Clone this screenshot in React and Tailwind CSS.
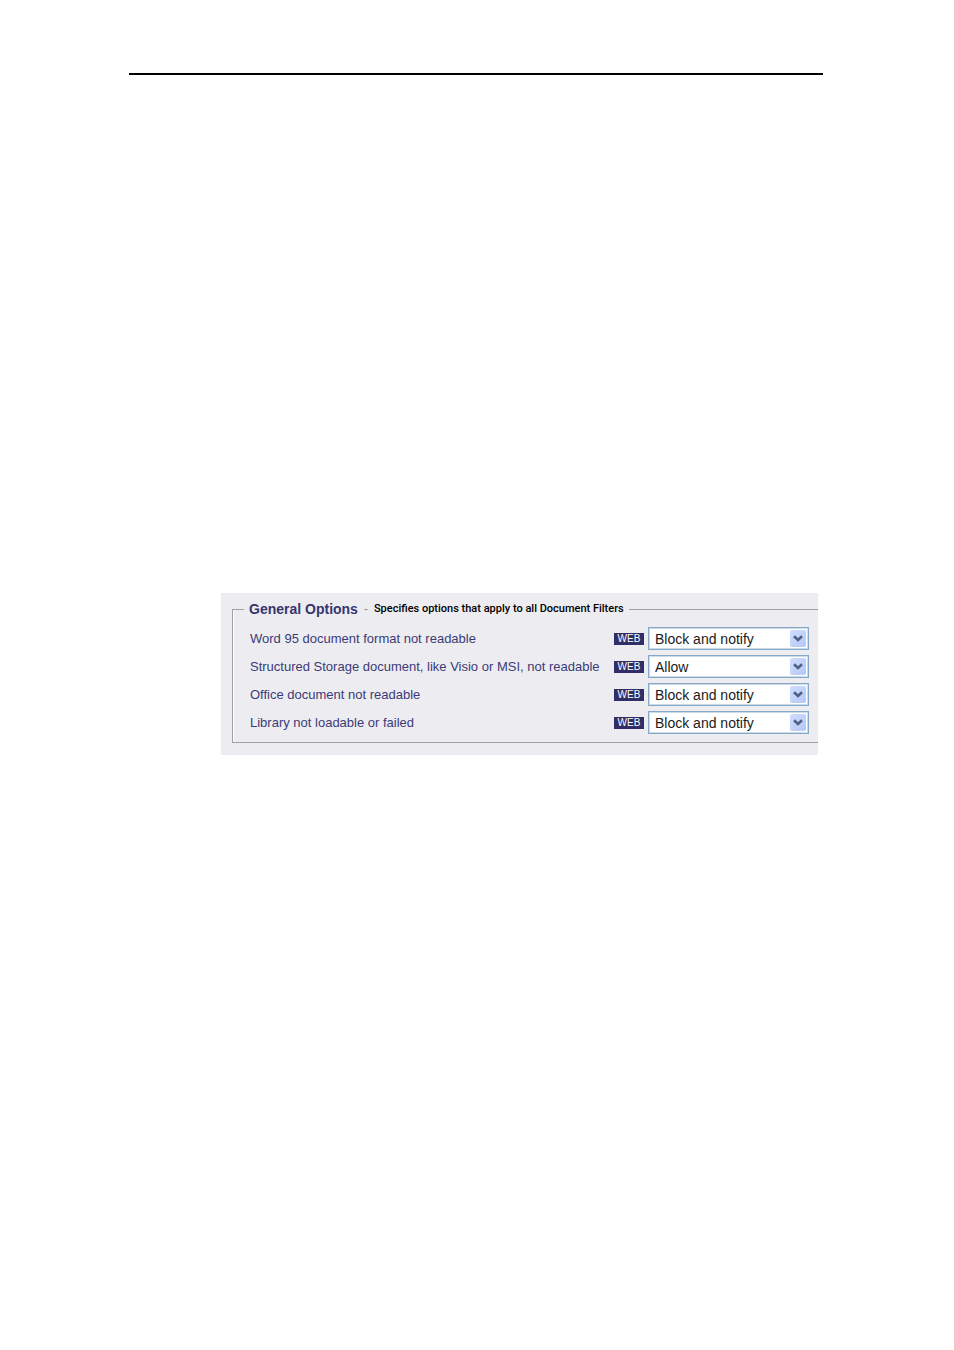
import React, { useState } from "react";

const ACTIONS = ["Block and notify", "Block", "Allow"];

const OPTIONS = [
  { id: "word95", label: "Word 95 document format not readable", value: "Block and notify" },
  { id: "storage", label: "Structured Storage document, like Visio or MSI, not readable", value: "Allow" },
  { id: "office", label: "Office document not readable", value: "Block and notify" },
  { id: "library", label: "Library not loadable or failed", value: "Block and notify" },
];

const Chevron = () => (
  <span className="pointer-events-none absolute right-[3px] top-[3px] flex h-[17px] w-4 items-center justify-center rounded-xs bg-linear-to-br from-[#cfdcfd] to-[#b4c8f6]">
    <svg width="10" height="7" viewBox="0 0 10 7" fill="none" aria-hidden="true">
      <path d="M1 1.2 L5 5 L9 1.2" stroke="#4d6185" strokeWidth="2.6" />
    </svg>
  </span>
);

const OptionRow = ({ option }) => {
  const [value, setValue] = useState(option.value);

  return (
    <div className="flex h-[23px] items-center">
      <label htmlFor={option.id} className="flex-1 whitespace-nowrap text-[13px] leading-4 text-[#3b3b78]">
        {option.label}
      </label>
      <span className="mr-1 flex h-3 w-[30px] items-center justify-center bg-[#2f2e66] text-[10px] leading-3 text-white">
        WEB
      </span>
      <div className="relative w-[161px]">
        <select
          id={option.id}
          value={value}
          onChange={(e) => setValue(e.target.value)}
          className="block h-[23px] w-full appearance-none border border-[#86a8c9] bg-white pl-[6px] text-sm leading-4 text-[#1a1a1a] shadow-[inset_0_0_0_1px_#cbdbea]"
        >
          {ACTIONS.map((action) => (
            <option key={action}>{action}</option>
          ))}
        </select>
        <Chevron />
      </div>
    </div>
  );
};

const GeneralOptions = () => (
  <section className="bg-[#ededf1] pb-3 pl-[11px] pt-2">
    <fieldset className="border-b border-l border-t border-[#a0a0a0] pb-2 pl-[17px] pr-[9px] shadow-[inset_1px_0_0_#ffffff]">
      <legend className="-ml-1.5 flex items-center whitespace-nowrap px-[5px] leading-4">
        <span className="text-sm font-bold leading-4 text-[#35356f]">General Options</span>
        <span className="mx-[6px] text-xs leading-4 text-[#8a8a8a]">-</span>
        <span className="font-['Roboto','Liberation_Sans',sans-serif] text-[11px] font-medium leading-4 text-black">
          Specifies options that apply to all Document Filters
        </span>
      </legend>
      <div className="mt-[10px] flex flex-col gap-[5px]">
        {OPTIONS.map((option) => (
          <OptionRow key={option.id} option={option} />
        ))}
      </div>
    </fieldset>
  </section>
);

const App = () => {
  return (
    <main className="min-h-screen bg-white pl-[129px] pr-[131px] pt-[73px] font-['Liberation_Sans',Arial,sans-serif]">
      <hr className="border-0 border-t-2 border-black" />
      <div className="ml-[92px] mr-[5px] mt-[518px]">
        <GeneralOptions />
      </div>
    </main>
  );
};

export default App;
